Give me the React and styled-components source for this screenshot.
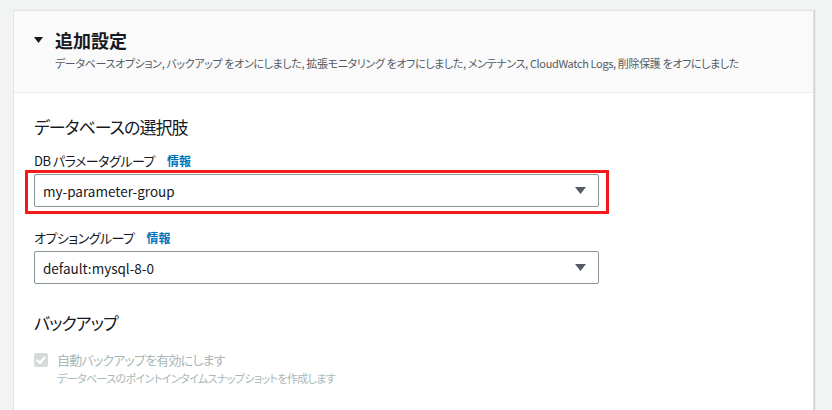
import React from 'react';
import styled, { createGlobalStyle } from 'styled-components';

const GlobalStyle = createGlobalStyle`
  html, body {
    margin: 0;
    padding: 0;
    background: #f2f3f3;
  }
  body {
    font-family: "Noto Sans CJK JP", "Noto Sans", sans-serif;
    font-feature-settings: "palt";
    color: #16191f;
  }
`;

const Page = styled.div`
  padding: 10px 18px 0 13px;
  height: 400px;
  overflow: hidden;
`;

const Card = styled.div`
  background: #ffffff;
  border: 1px solid #e2e5e5;
  box-shadow: 1px 0 1px rgba(0, 22, 30, 0.15);
  min-height: 420px;
`;

const CardHeader = styled.div`
  background: #fafafa;
  border-bottom: 1px solid #eaeded;
  padding: 17px 20px 20px 20px;
`;

const HeaderRow = styled.div`
  display: flex;
  align-items: center;
  gap: 12px;
`;

const Title = styled.h2`
  margin: 0;
  font-size: 18px;
  line-height: 24px;
  font-weight: 700;
  color: #16191f;
`;

const Description = styled.p`
  margin: 2px 0 0 21px;
  font-size: 11px;
  letter-spacing: -0.35px;
  line-height: 18px;
  color: #545b64;
  white-space: nowrap;
`;

const Body = styled.div`
  padding: 22px 20px 20px 20px;
`;

const SectionTitle = styled.h3`
  margin: 0 0 ${(p) => p.$after || 12}px 0;
  font-size: 17px;
  letter-spacing: -1px;
  line-height: 24px;
  font-weight: 400;
  color: #16191f;
`;

const Field = styled.div`
  margin-bottom: ${(p) => p.$gap || 18}px;
`;

const Label = styled.div`
  display: flex;
  align-items: center;
  gap: 12px;
  font-size: 13px;
  letter-spacing: -0.5px;
  line-height: 20px;
  color: #16191f;
  margin-bottom: 3px;
`;

const InfoLink = styled.a`
  color: #0073bb;
  font-size: 12px;
  letter-spacing: 0;
  font-weight: 700;
  text-decoration: none;
`;

const SelectWrap = styled.div`
  position: relative;
  width: 565px;
`;

const Select = styled.div`
  display: flex;
  align-items: center;
  justify-content: space-between;
  height: 31px;
  padding: 0 12px 0 8px;
  border: 1px solid #879596;
  border-radius: 2px;
  font-size: 13.5px;
  color: #16191f;
  background: #ffffff;
`;

const Highlight = styled.div`
  position: absolute;
  top: -4px;
  left: -9px;
  right: -10px;
  bottom: -7px;
  border: 3px solid #f51a1a;
  pointer-events: none;
`;

const CheckRow = styled.div`
  display: flex;
  gap: 9px;
`;

const Box = styled.div`
  flex: none;
  width: 14px;
  height: 14px;
  margin-top: 3px;
  border-radius: 2px;
  background: #d5dbdb;
  display: flex;
  align-items: center;
  justify-content: center;
`;

const CheckText = styled.div`
  display: flex;
  flex-direction: column;
`;

const CheckLabel = styled.span`
  font-size: 13px;
  letter-spacing: -0.8px;
  line-height: 20px;
  color: #aab7b8;
`;

const CheckHint = styled.span`
  font-size: 11px;
  letter-spacing: -0.6px;
  line-height: 16px;
  color: #aab7b8;
`;

function Caret({ size = 9, color = '#16191f' }) {
  return (
    <svg width={size} height={size * 0.67} viewBox="0 0 9 6">
      <path d="M0 0 L9 0 L4.5 6 Z" fill={color} />
    </svg>
  );
}

function Dropdown({ value, highlighted }) {
  return (
    <SelectWrap>
      <Select>
        <span>{value}</span>
        <svg width="11" height="7" viewBox="0 0 11 7">
          <path d="M0 0 L11 0 L5.5 7 Z" fill="#545b64" />
        </svg>
      </Select>
      {highlighted && <Highlight />}
    </SelectWrap>
  );
}

export default function App() {
  return (
    <>
      <GlobalStyle />
      <Page>
        <Card>
          <CardHeader>
            <HeaderRow>
              <Caret />
              <Title>追加設定</Title>
            </HeaderRow>
            <Description>
              データベースオプション, バックアップ をオンにしました, 拡張モニタリング をオフにしました, メンテナンス, CloudWatch Logs, 削除保護 をオフにしました
            </Description>
          </CardHeader>
          <Body>
            <SectionTitle>データベースの選択肢</SectionTitle>
            <Field $gap={21}>
              <Label>
                DB パラメータグループ <InfoLink href="#">情報</InfoLink>
              </Label>
              <Dropdown value="my-parameter-group" highlighted />
            </Field>
            <Field $gap={27}>
              <Label>
                オプショングループ <InfoLink href="#">情報</InfoLink>
              </Label>
              <Dropdown value="default:mysql-8-0" />
            </Field>
            <SectionTitle $after={15}>バックアップ</SectionTitle>
            <CheckRow>
              <Box>
                <svg width="10" height="8" viewBox="0 0 10 8">
                  <path d="M1 4 L4 7 L9 1" stroke="#ffffff" strokeWidth="2" fill="none" />
                </svg>
              </Box>
              <CheckText>
                <CheckLabel>自動バックアップを有効にします</CheckLabel>
                <CheckHint>データベースのポイントインタイムスナップショットを作成します</CheckHint>
              </CheckText>
            </CheckRow>
          </Body>
        </Card>
      </Page>
    </>
  );
}
